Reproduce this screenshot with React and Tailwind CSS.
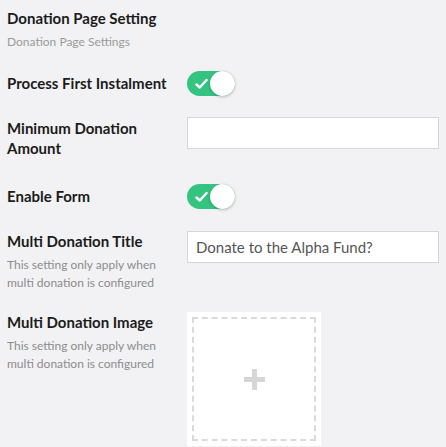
function Toggle() {
  return (
    <div className="relative h-[25px] w-[48px] rounded-full bg-[#35c381]">
      <svg
        className="absolute left-[8px] top-[7px] h-[12px] w-[13px]"
        viewBox="0 0 13 12"
        fill="none"
        stroke="white"
        strokeWidth="2.4"
        strokeLinecap="round"
        strokeLinejoin="round"
      >
        <path d="M1.5 6.5 4.8 9.5 11.5 2" />
      </svg>
      <div className="absolute right-0 top-0 h-[25px] w-[25px] rounded-full bg-white shadow-[0_1px_3px_rgba(0,0,0,0.25)]"></div>
    </div>
  );
}

function Label({ children, help }) {
  return (
    <div className="w-[180px] shrink-0 pr-[12px]">
      <div className="text-[15px] font-bold leading-[20px] text-[#1b1b1b]">{children}</div>
      {help && (
        <div className="mt-[5px] text-[12px] leading-[18px] text-[#8c8c8c]">{help}</div>
      )}
    </div>
  );
}

export default function App() {
  return (
    <div
      className="h-[447px] w-[446px] overflow-hidden bg-[#f2f2f4] px-[7px] pt-[7px]"
      style={{ fontFamily: "Lato, 'Noto Sans', sans-serif" }}
    >
      <div className="text-[15px] font-bold leading-[22px] text-[#1b1b1b]">Donation Page Setting</div>
      <div className="mt-[5px] text-[12px] leading-[16px] text-[#9a9a9a]">Donation Page Settings</div>

      <div className="mt-[21px] flex items-start">
        <div className="pt-[2px]">
          <Label>Process First Instalment</Label>
        </div>
        <Toggle />
      </div>

      <div className="mt-[21px] flex items-start">
        <div className="pt-[1px]">
          <Label>Minimum Donation Amount</Label>
        </div>
        <input className="h-[32px] w-[252px] border border-[#d6d6d9] bg-white px-[8px] text-[15px] text-[#555] outline-none" />
      </div>

      <div className="mt-[26px] flex items-start">
        <div className="pt-[2px]">
          <Label>Enable Form</Label>
        </div>
        <Toggle />
      </div>

      <div className="mt-[22px] flex items-start">
        <Label help="This setting only apply when multi donation is configured">Multi Donation Title</Label>
        <input
          defaultValue="Donate to the Alpha Fund?"
          className="h-[32px] w-[252px] border border-[#d6d6d9] bg-white px-[8px] text-[15px] text-[#555] outline-none"
        />
      </div>

      <div className="mt-[20px] flex items-start">
        <Label help="This setting only apply when multi donation is configured">Multi Donation Image</Label>
        <div className="h-[134px] w-[134px] bg-white p-[5px]">
          <div className="flex h-full w-full items-center justify-center border-2 border-dashed border-[#dadada]">
            <div className="relative h-[21px] w-[21px]">
              <div className="absolute left-0 top-[8px] h-[5px] w-[21px] bg-[#d6d6d6]"></div>
              <div className="absolute left-[8px] top-0 h-[21px] w-[5px] bg-[#d6d6d6]"></div>
            </div>
          </div>
        </div>
      </div>
    </div>
  );
}
